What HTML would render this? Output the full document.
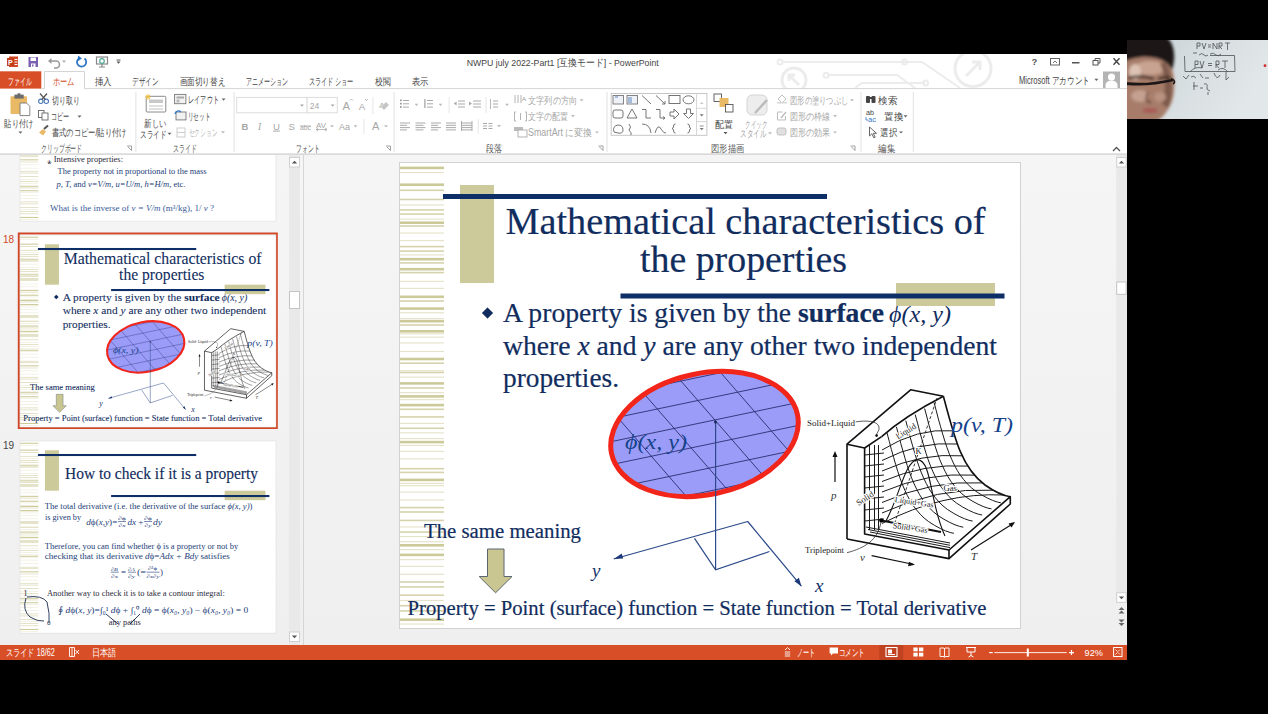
<!DOCTYPE html>
<html><head><meta charset="utf-8">
<style>
*{margin:0;padding:0;box-sizing:border-box}
html,body{width:1268px;height:714px;overflow:hidden;background:#000}
body{position:relative;font-family:"Liberation Sans",sans-serif}
.a{position:absolute}
svg{display:block}
</style></head>
<body>
<div class="a" style="left:0;top:54px;width:1127px;height:101px;background:#fff"></div>
<div class="a" style="left:0;top:155px;width:1127px;height:490px;background:linear-gradient(#f5f5f5,#efefef)"></div>
<svg class="a" style="left:0;top:0" width="1268" height="714" viewBox="0 0 1268 714">
<clipPath id="tb"><rect x="0" y="54" width="1127" height="35"/></clipPath><g clip-path="url(#tb)" stroke="#ececec" stroke-width="2" fill="none"><path d="M782 62 H904 L922 62 L960 88"/><circle cx="780" cy="62" r="2.5"/><circle cx="904.5" cy="62" r="2.5"/><path d="M828 75 H897 L915 88"/><circle cx="826" cy="75.2" r="2.5"/><path d="M855 88 L862 83 H925"/><circle cx="925.6" cy="83" r="2.5"/><circle cx="973" cy="68.6" r="18" stroke-width="3"/><path d="M966 76 L980 62 M972 62 H980 V70" stroke-width="3"/><circle cx="794" cy="80" r="12" stroke-width="3"/><path d="M799 85 L789 75 M789 81 V75 H795" stroke-width="3"/></g><rect x="9" y="56.5" width="9" height="10.5" fill="#d24726"/><rect x="7" y="58" width="7" height="8" fill="#c43e1c"/><text x="8" y="65" font-size="7" font-weight="bold" fill="#fff" font-family="Liberation Sans">P</text><rect x="14.5" y="59" width="3" height="1" fill="#fff"/><rect x="14.5" y="61.5" width="3" height="1" fill="#fff"/><rect x="14.5" y="64" width="3" height="1" fill="#fff"/><rect x="28.5" y="57" width="9.5" height="10" fill="#7b5fb0"/><rect x="30.5" y="57.5" width="5.5" height="3.5" fill="#fff"/><rect x="31" y="63.5" width="4.5" height="3.5" fill="#fff"/><rect x="32" y="64.5" width="1.5" height="2" fill="#7b5fb0"/><path d="M50 61 h6 a3.5 3.5 0 0 1 0 7 h-2" fill="none" stroke="#999" stroke-width="1.6"/><path d="M48 61 l3.5 -3 v6 z" fill="#999"/><path d="M62 60.5 h4 l-2 2.2 z" fill="#aaa"/><path d="M84.5 58.5 a4.6 4.6 0 1 1 -5 -0.5" fill="none" stroke="#2f76c7" stroke-width="1.8"/><path d="M78 55.5 l4 3 l-4 2.5 z" fill="#2f76c7"/><rect x="96.5" y="57" width="11" height="7" fill="none" stroke="#888" stroke-width="1.2"/><circle cx="102" cy="61" r="2.3" fill="none" stroke="#5a9" stroke-width="1.2"/><path d="M99 67 h6 M102 64 v3" stroke="#888" stroke-width="1.2"/><path d="M116.5 60 h4" stroke="#555" stroke-width="1"/><path d="M116.5 61.5 h4 l-2 2.2 z" fill="#555"/><text x="466.7" y="66.1" font-size="9.8" fill="#444" font-family="Liberation Sans" text-anchor="start" textLength="192" lengthAdjust="spacingAndGlyphs" >NWPU july 2022-Part1 [互換モード] - PowerPoint</text><text x="1031.5" y="65" font-size="9.5" font-weight="bold" fill="#555" font-family="Liberation Sans">?</text><rect x="1050.5" y="58.5" width="9" height="6.5" fill="none" stroke="#666" stroke-width="1"/><path d="M1053 63 l2 -2 l2 2" fill="none" stroke="#666" stroke-width="0.9"/><rect x="1072" y="62" width="7.5" height="1.5" fill="#555"/><rect x="1093" y="60.5" width="5" height="4.5" fill="none" stroke="#555" stroke-width="1"/><path d="M1095 60.5 v-2 h5 v4.5 h-2" fill="none" stroke="#555" stroke-width="1"/><path d="M1113.5 58.3 l6 6.4 M1119.5 58.3 l-6 6.4" stroke="#444" stroke-width="1.4"/><rect x="0" y="71.3" width="41.3" height="17.3" fill="#d84f27"/><text x="8.2" y="84.5" font-size="10" fill="#fff" font-family="Liberation Sans" text-anchor="start" textLength="23.3" lengthAdjust="spacingAndGlyphs" >ファイル</text><path d="M44.5 88.6 V71.5 H84.5 V88.6" fill="#fff" stroke="#d5d5d5" stroke-width="1"/><path d="M41.3 88.6 H44.5 M84.5 88.6 H1127" stroke="#d5d5d5" stroke-width="1"/><text x="52.6" y="84.8" font-size="10" fill="#d24726" font-family="Liberation Sans" text-anchor="start" textLength="21.8" lengthAdjust="spacingAndGlyphs" >ホーム</text><text x="94.9" y="84.6" font-size="10" fill="#444" font-family="Liberation Sans" text-anchor="start" textLength="16.9" lengthAdjust="spacingAndGlyphs" >挿入</text><text x="132.3" y="84.6" font-size="10" fill="#444" font-family="Liberation Sans" text-anchor="start" textLength="26.3" lengthAdjust="spacingAndGlyphs" >デザイン</text><text x="179.6" y="84.6" font-size="10" fill="#444" font-family="Liberation Sans" text-anchor="start" textLength="45.7" lengthAdjust="spacingAndGlyphs" >画面切り替え</text><text x="246.0" y="84.6" font-size="10" fill="#444" font-family="Liberation Sans" text-anchor="start" textLength="42.1" lengthAdjust="spacingAndGlyphs" >アニメーション</text><text x="308.6" y="84.6" font-size="10" fill="#444" font-family="Liberation Sans" text-anchor="start" textLength="45.0" lengthAdjust="spacingAndGlyphs" >スライド ショー</text><text x="374.9" y="84.6" font-size="10" fill="#444" font-family="Liberation Sans" text-anchor="start" textLength="15.7" lengthAdjust="spacingAndGlyphs" >校閲</text><text x="411.9" y="84.6" font-size="10" fill="#444" font-family="Liberation Sans" text-anchor="start" textLength="16.6" lengthAdjust="spacingAndGlyphs" >表示</text><text x="1019.0" y="83.7" font-size="10" fill="#444" font-family="Liberation Sans" text-anchor="start" textLength="70.7" lengthAdjust="spacingAndGlyphs" >Microsoft アカウント</text><path d="M1094.4 78.8 h4 l-2 2.2 z" fill="#666"/><rect x="1103" y="71.5" width="17" height="16.5" fill="#b4b4b4"/><circle cx="1111.5" cy="77" r="3.6" fill="#fff"/><path d="M1105.5 88 v-3 a6 4.5 0 0 1 12 0 v3 z" fill="#fff"/><rect x="135.4" y="92" width="1" height="60" fill="#e2e2e2"/><rect x="233.6" y="92" width="1" height="60" fill="#e2e2e2"/><rect x="393.6" y="92" width="1" height="60" fill="#e2e2e2"/><rect x="606.5" y="92" width="1" height="60" fill="#e2e2e2"/><rect x="860.5" y="92" width="1" height="60" fill="#e2e2e2"/><rect x="912.8" y="92" width="1" height="60" fill="#e2e2e2"/><rect x="0" y="153.3" width="1127" height="1.7" fill="#dadada"/><text x="40.9" y="152.4" font-size="10" fill="#555" font-family="Liberation Sans" text-anchor="start" textLength="41.4" lengthAdjust="spacingAndGlyphs" >クリップボード</text><text x="173.1" y="152.4" font-size="10" fill="#555" font-family="Liberation Sans" text-anchor="start" textLength="23.6" lengthAdjust="spacingAndGlyphs" >スライド</text><text x="296.4" y="152.4" font-size="10" fill="#555" font-family="Liberation Sans" text-anchor="start" textLength="23.4" lengthAdjust="spacingAndGlyphs" >フォント</text><text x="486.0" y="152.4" font-size="10" fill="#555" font-family="Liberation Sans" text-anchor="start" textLength="16.0" lengthAdjust="spacingAndGlyphs" >段落</text><text x="711.0" y="152.4" font-size="10" fill="#555" font-family="Liberation Sans" text-anchor="start" textLength="33.0" lengthAdjust="spacingAndGlyphs" >図形描画</text><text x="878.0" y="152.4" font-size="10" fill="#555" font-family="Liberation Sans" text-anchor="start" textLength="17.0" lengthAdjust="spacingAndGlyphs" >編集</text><path d="M127.0 146 h4.5 v4.5 M128.0 147 l3.5 3.5" fill="none" stroke="#888" stroke-width="0.8"/><path d="M386.0 146 h4.5 v4.5 M387.0 147 l3.5 3.5" fill="none" stroke="#888" stroke-width="0.8"/><path d="M598.5 146 h4.5 v4.5 M599.5 147 l3.5 3.5" fill="none" stroke="#888" stroke-width="0.8"/><path d="M850.5 146 h4.5 v4.5 M851.5 147 l3.5 3.5" fill="none" stroke="#888" stroke-width="0.8"/><rect x="10.5" y="96.3" width="16.5" height="17.7" rx="1" fill="#e9b965"/><rect x="14.4" y="94.6" width="9.3" height="4" fill="#6d6d6d"/><rect x="17.5" y="93.3" width="3" height="2" fill="#6d6d6d"/><path d="M20 103 h6.5 l3.3 3.3 v9.3 h-9.8 z" fill="#fff" stroke="#777" stroke-width="0.9"/><text x="4.4" y="127.3" font-size="10" fill="#444" font-family="Liberation Sans" text-anchor="start" textLength="28.6" lengthAdjust="spacingAndGlyphs" >貼り付け</text><path d="M18.4 131.5 h4 l-2 2.2 z" fill="#666"/><circle cx="40.8" cy="101.3" r="2.2" fill="none" stroke="#4a78b8" stroke-width="1.1"/><circle cx="46.3" cy="101.3" r="2.2" fill="none" stroke="#4a78b8" stroke-width="1.1"/><path d="M41.8 99.5 L47 93.5 M45.3 99.5 L40 93.5" stroke="#555" stroke-width="1.2"/><text x="51.9" y="103.6" font-size="10" fill="#444" font-family="Liberation Sans" text-anchor="start" textLength="27.6" lengthAdjust="spacingAndGlyphs" >切り取り</text><rect x="38.5" y="110.5" width="5.5" height="7" fill="#fff" stroke="#666" stroke-width="0.9"/><rect x="42" y="113" width="6" height="7" fill="#fff" stroke="#666" stroke-width="0.9"/><text x="51.3" y="120.2" font-size="10" fill="#444" font-family="Liberation Sans" text-anchor="start" textLength="18.3" lengthAdjust="spacingAndGlyphs" >コピー</text><path d="M77.5 115.5 h4 l-2 2.2 z" fill="#666"/><path d="M39 132.5 l4 3 l3 -4 l-3 -2.5 z" fill="#e9b965"/><path d="M44 129 l4 -3.5" stroke="#555" stroke-width="2"/><text x="51.9" y="136.2" font-size="10" fill="#444" font-family="Liberation Sans" text-anchor="start" textLength="74.5" lengthAdjust="spacingAndGlyphs" >書式のコピー/貼り付け</text><rect x="146.2" y="96.3" width="19.6" height="15.7" rx="1" fill="#fff" stroke="#8a8a8a" stroke-width="1"/><rect x="149" y="99.5" width="14" height="3.5" fill="#c8c8c8"/><path d="M149 106 h14 M149 109 h14" stroke="#b0b0b0" stroke-width="0.8"/><path d="M148 94 v6 M145 97 h6 M146 95 l4 4 M150 95 l-4 4" stroke="#f3c13a" stroke-width="0.9"/><text x="144.2" y="127.3" font-size="10" fill="#444" font-family="Liberation Sans" text-anchor="start" textLength="22.1" lengthAdjust="spacingAndGlyphs" >新しい</text><text x="140.3" y="137.6" font-size="10" fill="#444" font-family="Liberation Sans" text-anchor="start" textLength="26.2" lengthAdjust="spacingAndGlyphs" >スライド</text><path d="M167.5 132.8 h4 l-2 2.2 z" fill="#666"/><rect x="174.6" y="94.4" width="11.3" height="9.3" fill="#f2f2f2" stroke="#777" stroke-width="0.9"/><rect x="176.5" y="96.5" width="7.5" height="2" fill="#aaa"/><rect x="176.5" y="99.5" width="3" height="3" fill="#bbb"/><text x="188.3" y="103.3" font-size="10" fill="#444" font-family="Liberation Sans" text-anchor="start" textLength="30.4" lengthAdjust="spacingAndGlyphs" >レイアウト</text><path d="M221.6 98.5 h4 l-2 2.2 z" fill="#666"/><rect x="176" y="112" width="10" height="7.9" fill="#f2f2f2" stroke="#777" stroke-width="0.9"/><path d="M175 114 a3.5 3.5 0 0 1 6 -2" fill="none" stroke="#2f76c7" stroke-width="1.3"/><text x="187.8" y="120.0" font-size="10" fill="#444" font-family="Liberation Sans" text-anchor="start" textLength="22.6" lengthAdjust="spacingAndGlyphs" >リセット</text><rect x="177" y="128" width="8" height="9" fill="none" stroke="#c8c8c8" stroke-width="0.9"/><path d="M177 132.5 h8" stroke="#c8c8c8" stroke-width="0.9"/><text x="188.8" y="136.1" font-size="10" fill="#b5b5b5" font-family="Liberation Sans" text-anchor="start" textLength="28.5" lengthAdjust="spacingAndGlyphs" >セクション</text><path d="M221 131.3 h4 l-2 2.2 z" fill="#bbb"/><rect x="236.7" y="97.4" width="70.4" height="15.4" fill="#fff" stroke="#dcdcdc" stroke-width="1"/><rect x="307.1" y="97.4" width="30.2" height="15.4" fill="#fff" stroke="#dcdcdc" stroke-width="1"/><path d="M300 104.5 h4 l-2 2.2 z" fill="#aaa"/><path d="M330.6 104.5 h4 l-2 2.2 z" fill="#aaa"/><text x="309.8" y="108.6" font-size="9.5" fill="#a8a8a8" font-family="Liberation Sans" text-anchor="start" textLength="9.5" lengthAdjust="spacingAndGlyphs" >24</text><text x="342.6" y="109.5" font-size="11" fill="#a8a8a8" font-family="Liberation Sans" text-anchor="start" textLength="7.5" lengthAdjust="spacingAndGlyphs" >A</text><path d="M350 100.5 l1.5 -1.5 l1.5 1.5" stroke="#a8a8a8" fill="none" stroke-width="0.8"/><text x="358.7" y="109.5" font-size="9.5" fill="#a8a8a8" font-family="Liberation Sans" text-anchor="start" textLength="6.5" lengthAdjust="spacingAndGlyphs" >A</text><path d="M365 99 l1.5 1.5 l1.5 -1.5" stroke="#a8a8a8" fill="none" stroke-width="0.8"/><rect x="372.4" y="97" width="1" height="17" fill="#e6e6e6"/><text x="379" y="107.5" font-size="8" fill="#b0b0b0" font-family="Liberation Sans" text-anchor="start" textLength="6" lengthAdjust="spacingAndGlyphs" >A</text><path d="M381 107 l5 -5 l3 3 l-5 5 z" fill="#c6c6c6"/><g fill="#a6a6a6" font-family="Liberation Sans" font-size="9.5"><text x="241.4" y="129.6" font-weight="bold">B</text><text x="258" y="129.6" font-style="italic" font-family="Liberation Serif">I</text><text x="273" y="129.6" text-decoration="underline">U</text><text x="288.5" y="129.6">S</text><text x="300" y="129.6" font-size="8" textLength="11" lengthAdjust="spacingAndGlyphs">abc</text><text x="316" y="128.1" font-size="8" textLength="10" lengthAdjust="spacingAndGlyphs">AV</text><text x="339" y="129.6" textLength="11" lengthAdjust="spacingAndGlyphs">Aa</text><text x="372" y="130.1" font-size="11">A</text></g><path d="M300 126 h11" stroke="#a6a6a6" stroke-width="0.8"/><path d="M316 129.5 h11 M316 129.5 l2 -1.5 M316 129.5 l2 1.5 M327 129.5 l-2 -1.5 M327 129.5 l-2 1.5" stroke="#a6a6a6" stroke-width="0.8" fill="none"/><path d="M330 125.3 h4 l-2 2.2 z" fill="#bbb"/><path d="M353.5 125.3 h4 l-2 2.2 z" fill="#bbb"/><path d="M384 125.3 h4 l-2 2.2 z" fill="#bbb"/><rect x="363.4" y="119" width="1" height="15" fill="#e6e6e6"/><rect x="403" y="100.0" width="6" height="1" fill="#aaa"/><rect x="403" y="103.3" width="6" height="1" fill="#aaa"/><rect x="403" y="106.6" width="6" height="1" fill="#aaa"/><rect x="400" y="99.5" width="1.7" height="1.7" fill="#999"/><rect x="400" y="102.8" width="1.7" height="1.7" fill="#999"/><rect x="400" y="106.1" width="1.7" height="1.7" fill="#999"/><path d="M414.5 103.8 h4 l-2 2.2 z" fill="#bbb"/><rect x="427" y="100.0" width="6" height="1" fill="#aaa"/><rect x="427" y="103.3" width="6" height="1" fill="#aaa"/><rect x="427" y="106.6" width="6" height="1" fill="#aaa"/><rect x="424" y="99" width="1.7" height="9" fill="#bbb"/><path d="M438.5 103.8 h4 l-2 2.2 z" fill="#bbb"/><rect x="448.6" y="97" width="1" height="16" fill="#e6e6e6"/><rect x="485.5" y="97" width="1" height="16" fill="#e6e6e6"/><rect x="458" y="100.5" width="7" height="1" fill="#aaa"/><rect x="458" y="103.5" width="7" height="1" fill="#aaa"/><rect x="458" y="106.5" width="7" height="1" fill="#aaa"/><path d="M453.6 103.5 l3 -2 v4 z" fill="#aaa"/><rect x="473" y="100.5" width="8" height="1" fill="#aaa"/><rect x="473" y="103.5" width="8" height="1" fill="#aaa"/><rect x="473" y="106.5" width="8" height="1" fill="#aaa"/><path d="M469 101.5 l3 2 l-3 2 z" fill="#aaa"/><rect x="493" y="100.5" width="5" height="1" fill="#aaa"/><rect x="493" y="103.5" width="5" height="1" fill="#aaa"/><rect x="493" y="106.5" width="5" height="1" fill="#aaa"/><path d="M490.5 99 v10" stroke="#aaa" stroke-width="0.8"/><path d="M505 103.8 h4 l-2 2.2 z" fill="#bbb"/><rect x="400" y="122.5" width="10" height="1" fill="#aaa"/><rect x="400" y="124.8" width="7" height="1" fill="#aaa"/><rect x="400" y="127.1" width="10" height="1" fill="#aaa"/><rect x="400" y="129.4" width="7" height="1" fill="#aaa"/><rect x="415.5" y="122.5" width="10" height="1" fill="#aaa"/><rect x="415.5" y="124.8" width="8" height="1" fill="#aaa"/><rect x="415.5" y="127.1" width="10" height="1" fill="#aaa"/><rect x="415.5" y="129.4" width="8" height="1" fill="#aaa"/><rect x="431" y="122.5" width="10" height="1" fill="#aaa"/><rect x="431" y="124.8" width="7" height="1" fill="#aaa"/><rect x="431" y="127.1" width="10" height="1" fill="#aaa"/><rect x="431" y="129.4" width="7" height="1" fill="#aaa"/><rect x="446" y="122.5" width="10" height="1" fill="#aaa"/><rect x="446" y="124.8" width="10" height="1" fill="#aaa"/><rect x="446" y="127.1" width="10" height="1" fill="#aaa"/><rect x="446" y="129.4" width="10" height="1" fill="#aaa"/><rect x="461" y="122.5" width="11" height="1" fill="#aaa"/><rect x="461" y="124.8" width="11" height="1" fill="#aaa"/><rect x="461" y="127.1" width="11" height="1" fill="#aaa"/><rect x="461" y="129.4" width="11" height="1" fill="#aaa"/><rect x="461" y="121" width="1" height="10" fill="#aaa"/><rect x="471.5" y="121" width="1" height="10" fill="#aaa"/><rect x="477.7" y="119" width="1" height="15" fill="#e6e6e6"/><rect x="483" y="123.0" width="4" height="1" fill="#aaa"/><rect x="483" y="125.5" width="4" height="1" fill="#aaa"/><rect x="483" y="128.0" width="4" height="1" fill="#aaa"/><rect x="488.5" y="123.0" width="4" height="1" fill="#aaa"/><rect x="488.5" y="125.5" width="4" height="1" fill="#aaa"/><rect x="488.5" y="128.0" width="4" height="1" fill="#aaa"/><path d="M497 125 h4 l-2 2.2 z" fill="#bbb"/><path d="M515 95 v8 M518 95 v8 M521 95 v8" stroke="#aaa" stroke-width="0.9"/><text x="522" y="101" font-size="6" fill="#999" font-family="Liberation Sans" text-anchor="start" >A</text><text x="528.0" y="104.0" font-size="10" fill="#a6a6a6" font-family="Liberation Sans" text-anchor="start" textLength="49.0" lengthAdjust="spacingAndGlyphs" >文字列の方向</text><path d="M579.6 99.2 h4 l-2 2.2 z" fill="#bbb"/><path d="M516 112 h-1.5 v9 h1.5 M525 112 h1.5 v9 h-1.5 M520.5 113 v7" fill="none" stroke="#aaa" stroke-width="0.9"/><text x="528.0" y="119.8" font-size="10" fill="#a6a6a6" font-family="Liberation Sans" text-anchor="start" textLength="40.0" lengthAdjust="spacingAndGlyphs" >文字の配置</text><path d="M571 115 h4 l-2 2.2 z" fill="#bbb"/><rect x="514" y="127" width="9" height="4" fill="#bbb"/><rect x="518" y="130" width="9" height="7" fill="#fff" stroke="#aaa" stroke-width="0.9"/><text x="528.0" y="136.2" font-size="10" fill="#a6a6a6" font-family="Liberation Sans" text-anchor="start" textLength="64.0" lengthAdjust="spacingAndGlyphs" >SmartArt に変換</text><path d="M595 131.4 h4 l-2 2.2 z" fill="#bbb"/><rect x="611.2" y="93.5" width="95.7" height="41.8" fill="#fff" stroke="#c6c6c6" stroke-width="1"/><path d="M696.5 93.5 v41.8 M696.5 108.3 h10.4 M696.5 121.6 h10.4" stroke="#d6d6d6" stroke-width="1"/><path d="M701.7 102 l-2 2 h4 z" fill="#ccc"/><path d="M699.7 114.3 h4 l-2 2.2 z" fill="#777"/><path d="M699.7 126 h4" stroke="#777" stroke-width="0.8"/><path d="M699.7 128 h4 l-2 2.2 z" fill="#777"/><g fill="none" stroke="#666" stroke-width="0.9"><rect x="613" y="95.5" width="10.5" height="8.5" fill="#eef2f8" stroke="#777"/><rect x="627" y="95.5" width="10.5" height="8.5" fill="#eef2f8" stroke="#777"/><path d="M615 97 h3 M629 97 v6 M631 97 v6" stroke="#4a78b8"/><path d="M642 95.5 l9 8.5 M656 95.5 l9 8.5 l-3 0 M665 104 v-3"/><rect x="669" y="95.5" width="11" height="8"/><ellipse cx="688.5" cy="99.8" rx="5.5" ry="4"/><rect x="613" y="110" width="10" height="8" rx="2"/><path d="M627 118 l5 -9 l5 9 z"/><path d="M642 109.5 h4 v8.5 h5"/><path d="M656 109.5 h4 v8.5 h5 l-2 -1.5 M665 118 l-2 1.5"/><path d="M670 112 h4 v-3 l5 5 l-5 5 v-3 h-4 z"/><path d="M686.5 109 h4 v4.5 h3 l-5 5 l-5 -5 h3 z"/><path d="M614 132 q-2 -6 4 -7 q5 0 5 5 q0 4 -5 3 z"/><path d="M629 124 q3 3 0 6 q3 3 2 5"/><path d="M642 124 q8 0 9 9"/><path d="M655 133 q3 -10 6 -4 q3 5 5 4"/><path d="M675.5 124 q-2 0 -2 2 v1 q0 1 -1.5 1.5 q1.5 .5 1.5 1.5 v1 q0 2 2 2 M687.5 124 q2 0 2 2 v1 q0 1 1.5 1.5 q-1.5 .5 -1.5 1.5 v1 q0 2 -2 2"/></g><rect x="714" y="94" width="7.5" height="7.5" fill="#fff" stroke="#555" stroke-width="0.9"/><rect x="719.5" y="98" width="9" height="9" fill="#e9b965"/><rect x="725.5" y="104.5" width="7.5" height="7.5" fill="#fff" stroke="#555" stroke-width="0.9"/><text x="715.0" y="127.6" font-size="10" fill="#444" font-family="Liberation Sans" text-anchor="start" textLength="18.0" lengthAdjust="spacingAndGlyphs" >配置</text><path d="M723.5 132 h4 l-2 2.2 z" fill="#555"/><rect x="747" y="95" width="20" height="20" rx="5" fill="#ededed" stroke="#d0d0d0" stroke-width="0.9"/><path d="M755 113 l12 -13" stroke="#bbb" stroke-width="2.5"/><text x="745.0" y="127.6" font-size="10" fill="#a6a6a6" font-family="Liberation Sans" text-anchor="start" textLength="22.0" lengthAdjust="spacingAndGlyphs" >クイック</text><text x="740.0" y="137.0" font-size="10" fill="#a6a6a6" font-family="Liberation Sans" text-anchor="start" textLength="26.0" lengthAdjust="spacingAndGlyphs" >スタイル</text><path d="M768 132.2 h4 l-2 2.2 z" fill="#bbb"/><path d="M778 99 l4 -4 l4 4 l-4 4 z" fill="none" stroke="#b8b8b8" stroke-width="0.9"/><rect x="777" y="102" width="10" height="1.5" fill="#d8d8d8"/><text x="790.0" y="104.0" font-size="10" fill="#a6a6a6" font-family="Liberation Sans" text-anchor="start" textLength="58.0" lengthAdjust="spacingAndGlyphs" >図形の塗りつぶし</text><path d="M850 99.2 h4 l-2 2.2 z" fill="#bbb"/><path d="M777.5 112 h5 M777.5 112 v8 h8 v-4" fill="none" stroke="#b8b8b8" stroke-width="0.9"/><path d="M781 118 l5 -6" stroke="#b8b8b8" stroke-width="1.2"/><text x="790.0" y="119.8" font-size="10" fill="#a6a6a6" font-family="Liberation Sans" text-anchor="start" textLength="40.0" lengthAdjust="spacingAndGlyphs" >図形の枠線</text><path d="M833 115 h4 l-2 2.2 z" fill="#bbb"/><rect x="777" y="128" width="9" height="7" rx="2" fill="#e0e0e0" stroke="#bcbcbc" stroke-width="0.9"/><text x="790.0" y="136.2" font-size="10" fill="#a6a6a6" font-family="Liberation Sans" text-anchor="start" textLength="40.0" lengthAdjust="spacingAndGlyphs" >図形の効果</text><path d="M833 131.4 h4 l-2 2.2 z" fill="#bbb"/><rect x="866" y="96" width="4" height="7" rx="1" fill="#444"/><rect x="871.5" y="96" width="4" height="7" rx="1" fill="#444"/><rect x="869" y="97" width="3.5" height="2" fill="#444"/><text x="878.0" y="104.0" font-size="10" fill="#444" font-family="Liberation Sans" text-anchor="start" textLength="19.0" lengthAdjust="spacingAndGlyphs" >検索</text><text x="866" y="115" font-size="6.5" fill="#444" font-family="Liberation Sans" text-anchor="start" textLength="8" lengthAdjust="spacingAndGlyphs" >ab</text><text x="868" y="121.5" font-size="6.5" fill="#2f76c7" font-family="Liberation Sans" text-anchor="start" textLength="8" lengthAdjust="spacingAndGlyphs" >ac</text><path d="M866 117 v3 h2" stroke="#2f76c7" stroke-width="0.8" fill="none"/><text x="884.0" y="120.0" font-size="10" fill="#444" font-family="Liberation Sans" text-anchor="start" textLength="19.0" lengthAdjust="spacingAndGlyphs" >置換</text><path d="M903.5 115.2 h4 l-2 2.2 z" fill="#666"/><path d="M869.5 127 v9 l2.3 -2.2 l2 4 l1.4 -0.7 l-2 -3.8 h3.3 z" fill="#fff" stroke="#555" stroke-width="0.9"/><text x="880.0" y="136.2" font-size="10" fill="#444" font-family="Liberation Sans" text-anchor="start" textLength="17.0" lengthAdjust="spacingAndGlyphs" >選択</text><path d="M899 131.4 h4 l-2 2.2 z" fill="#666"/><path d="M1113 151 l3.5 -3.5 l3.5 3.5" fill="none" stroke="#555" stroke-width="1.3"/><rect x="289" y="155" width="11" height="490" fill="#e9e9e9"/><rect x="289.5" y="157.5" width="10" height="9.5" fill="#fff" stroke="#cfcfcf" stroke-width="1"/><path d="M291.8 163.5 l2.7 -2.7 l2.7 2.7 z" fill="#555"/><rect x="289.5" y="291.5" width="10" height="17" fill="#fff" stroke="#c4c4c4" stroke-width="1"/><rect x="289.5" y="632" width="10" height="9.5" fill="#fff" stroke="#cfcfcf" stroke-width="1"/><path d="M291.8 635.5 l2.7 2.7 l2.7 -2.7 z" fill="#555"/><rect x="303" y="155" width="1" height="490" fill="#d6d6d6"/><rect x="1116.2" y="155" width="10.5" height="447" fill="#e9e9e9"/><rect x="1116.7" y="157.5" width="9.5" height="9.5" fill="#fff" stroke="#cfcfcf" stroke-width="1"/><path d="M1118.8 163.5 l2.7 -2.7 l2.7 2.7 z" fill="#555"/><rect x="1116.7" y="282" width="9.5" height="12.3" fill="#fff" stroke="#c4c4c4" stroke-width="1"/><rect x="1116.7" y="592.7" width="9.5" height="9.6" fill="#fff" stroke="#cfcfcf" stroke-width="1"/><path d="M1118.8 596.5 l2.7 2.7 l2.7 -2.7 z" fill="#555"/><path d="M1118.5 610 l3 -3 l3 3 z M1118.5 613.5 l3 -3 l3 3 z M1118.5 619.5 l3 3 l3 -3 z M1118.5 623 l3 3 l3 -3 z" fill="#666"/><rect x="0" y="645" width="1127" height="15" fill="#d84f27"/><rect x="879.3" y="645" width="24" height="15" fill="#c04220"/><text x="5.7" y="656.4" font-size="10" fill="#fff" font-family="Liberation Sans" text-anchor="start" textLength="49.2" lengthAdjust="spacingAndGlyphs" >スライド 18/62</text><path d="M69.5 647.5 h5 v9 h-5 z M72 647.5 v9" fill="none" stroke="#fff" stroke-width="0.9"/><path d="M75.5 650 l3.5 4 M79 650 l-3.5 4" stroke="#fff" stroke-width="0.9"/><text x="91.8" y="656.4" font-size="10" fill="#fff" font-family="Liberation Sans" text-anchor="start" textLength="24.4" lengthAdjust="spacingAndGlyphs" >日本語</text><path d="M785 650 l2.5 -2.5 l2.5 2.5 M784.8 652 h5.4 M784.8 654 h5.4 M784.8 656 h5.4" fill="none" stroke="#fff" stroke-width="0.9"/><text x="797.0" y="656.4" font-size="10" fill="#fff" font-family="Liberation Sans" text-anchor="start" textLength="18.4" lengthAdjust="spacingAndGlyphs" >ノート</text><path d="M829.6 647.5 h8.4 v6 h-5 l-2 2 v-2 h-1.4 z" fill="#fff"/><text x="838.7" y="656.4" font-size="10" fill="#fff" font-family="Liberation Sans" text-anchor="start" textLength="26.4" lengthAdjust="spacingAndGlyphs" >コメント</text><rect x="886" y="647.5" width="11" height="9" fill="none" stroke="#fff" stroke-width="1.1"/><rect x="888" y="649.5" width="4" height="4" fill="#fff"/><rect x="888" y="654" width="7" height="1" fill="#fff"/><rect x="913.4" y="647.5" width="4.3" height="3.8" fill="#fff"/><rect x="919" y="647.5" width="4.3" height="3.8" fill="#fff"/><rect x="913.4" y="652.7" width="4.3" height="3.8" fill="#fff"/><rect x="919" y="652.7" width="4.3" height="3.8" fill="#fff"/><path d="M940 648 h4 l0.5 1 l0.5 -1 h4 v8.5 h-4 l-0.5 1 l-0.5 -1 h-4 z M944.5 649 v7.5" fill="none" stroke="#fff" stroke-width="0.9"/><path d="M966 647.5 h10 M967 647.5 v4.5 h8 v-4.5 M971 652 v3.5 M968.5 657 l2.5 -1.5 l2.5 1.5" fill="none" stroke="#fff" stroke-width="1"/><rect x="989.2" y="652" width="3.5" height="1.2" fill="#fff"/><rect x="994.3" y="652.2" width="72.4" height="0.9" fill="#fff"/><rect x="1026.8" y="648.5" width="2" height="8" fill="#fff"/><path d="M1069 652.6 h5 M1071.5 650 v5" stroke="#fff" stroke-width="1.2"/><text x="1084.6" y="656" font-size="9.5" fill="#fff" font-family="Liberation Sans" text-anchor="start" textLength="18.2" lengthAdjust="spacingAndGlyphs" >92%</text><rect x="1113.6" y="647.5" width="8.4" height="9" fill="none" stroke="#fff" stroke-width="1"/><path d="M1115.5 649.5 l2 2 M1120 649.5 l-2 2 M1115.5 654.5 l2 -2 M1120 654.5 l-2 -2" stroke="#fff" stroke-width="0.8"/>
<defs><clipPath id="ell"><ellipse cx="704.5" cy="434" rx="95" ry="60.6" transform="rotate(-11.9 704.5 434)"/></clipPath><clipPath id="c17"><rect x="0" y="155" width="290" height="80"/></clipPath><g id="tmpl">
<rect x="399.5" y="162.5" width="621" height="466" fill="#fff" stroke="#d2d2d2" stroke-width="1"/>
<g><rect x="400" y="166.6" width="44" height="2.6" fill="#cdca9a"/><rect x="400" y="172.0" width="44" height="1.1" fill="#e4e2c8"/><rect x="400" y="183.4" width="44" height="2.6" fill="#cdca9a"/><rect x="400" y="189.5" width="44" height="1.6" fill="#d6d3ac"/><rect x="400" y="198.7" width="44" height="1.6" fill="#d6d3ac"/><rect x="400" y="204.4" width="44" height="1.1" fill="#e4e2c8"/><rect x="400" y="209.1" width="44" height="1.6" fill="#d6d3ac"/><rect x="400" y="213.3" width="44" height="1.6" fill="#d6d3ac"/><rect x="400" y="218.6" width="44" height="1.1" fill="#e4e2c8"/><rect x="400" y="221.4" width="44" height="2.6" fill="#cdca9a"/><rect x="400" y="225.2" width="44" height="1.6" fill="#d6d3ac"/><rect x="400" y="232.5" width="44" height="1.1" fill="#e4e2c8"/><rect x="400" y="240.1" width="44" height="1.1" fill="#e4e2c8"/><rect x="400" y="245.8" width="44" height="1.6" fill="#d6d3ac"/><rect x="400" y="250.3" width="44" height="1.6" fill="#d6d3ac"/><rect x="400" y="254.4" width="44" height="1.1" fill="#e4e2c8"/><rect x="400" y="257.9" width="44" height="2.6" fill="#cdca9a"/><rect x="400" y="262.1" width="44" height="1.6" fill="#d6d3ac"/><rect x="400" y="267.9" width="44" height="2.6" fill="#cdca9a"/><rect x="400" y="271.8" width="44" height="1.6" fill="#d6d3ac"/><rect x="400" y="280.8" width="44" height="1.1" fill="#e4e2c8"/><rect x="400" y="287.8" width="44" height="1.1" fill="#e4e2c8"/><rect x="400" y="295.5" width="44" height="2.6" fill="#cdca9a"/><rect x="400" y="300.2" width="44" height="1.6" fill="#d6d3ac"/><rect x="400" y="307.3" width="44" height="2.6" fill="#cdca9a"/><rect x="400" y="312.2" width="44" height="1.1" fill="#e4e2c8"/><rect x="400" y="318.1" width="44" height="1.1" fill="#e4e2c8"/><rect x="400" y="319.9" width="44" height="2.6" fill="#cdca9a"/><rect x="400" y="324.2" width="44" height="1.6" fill="#d6d3ac"/><rect x="400" y="330.0" width="44" height="2.6" fill="#cdca9a"/><rect x="400" y="333.2" width="44" height="1.1" fill="#e4e2c8"/><rect x="400" y="336.6" width="44" height="1.1" fill="#e4e2c8"/><rect x="400" y="342.4" width="44" height="1.1" fill="#e4e2c8"/><rect x="400" y="350.9" width="44" height="1.1" fill="#e4e2c8"/><rect x="400" y="357.7" width="44" height="2.6" fill="#cdca9a"/><rect x="400" y="362.4" width="44" height="1.6" fill="#d6d3ac"/><rect x="400" y="370.2" width="44" height="1.1" fill="#e4e2c8"/><rect x="400" y="371.7" width="44" height="1.6" fill="#d6d3ac"/><rect x="400" y="376.6" width="44" height="1.1" fill="#e4e2c8"/><rect x="400" y="382.1" width="44" height="2.6" fill="#cdca9a"/><rect x="400" y="387.2" width="44" height="1.6" fill="#d6d3ac"/><rect x="400" y="392.1" width="44" height="1.1" fill="#e4e2c8"/><rect x="400" y="395.1" width="44" height="2.6" fill="#cdca9a"/><rect x="400" y="399.1" width="44" height="1.1" fill="#e4e2c8"/><rect x="400" y="403.8" width="44" height="2.6" fill="#cdca9a"/><rect x="400" y="408.5" width="44" height="1.6" fill="#d6d3ac"/><rect x="400" y="416.1" width="44" height="1.6" fill="#d6d3ac"/><rect x="400" y="422.8" width="44" height="1.1" fill="#e4e2c8"/><rect x="400" y="427.5" width="44" height="1.6" fill="#d6d3ac"/><rect x="400" y="432.3" width="44" height="1.1" fill="#e4e2c8"/><rect x="400" y="438.1" width="44" height="1.1" fill="#e4e2c8"/><rect x="400" y="440.8" width="44" height="2.6" fill="#cdca9a"/><rect x="400" y="444.9" width="44" height="1.1" fill="#e4e2c8"/><rect x="400" y="450.8" width="44" height="1.1" fill="#e4e2c8"/><rect x="400" y="458.3" width="44" height="1.1" fill="#e4e2c8"/><rect x="400" y="467.9" width="44" height="1.6" fill="#d6d3ac"/><rect x="400" y="471.6" width="44" height="1.6" fill="#d6d3ac"/><rect x="400" y="478.6" width="44" height="2.6" fill="#cdca9a"/><rect x="400" y="482.8" width="44" height="1.1" fill="#e4e2c8"/><rect x="400" y="485.2" width="44" height="1.1" fill="#e4e2c8"/><rect x="400" y="491.6" width="44" height="1.1" fill="#e4e2c8"/><rect x="400" y="499.4" width="44" height="1.1" fill="#e4e2c8"/><rect x="400" y="506.8" width="44" height="1.6" fill="#d6d3ac"/><rect x="400" y="511.2" width="44" height="1.6" fill="#d6d3ac"/><rect x="400" y="519.6" width="44" height="1.6" fill="#d6d3ac"/><rect x="400" y="526.4" width="44" height="1.1" fill="#e4e2c8"/><rect x="400" y="531.3" width="44" height="1.6" fill="#d6d3ac"/><rect x="400" y="536.0" width="44" height="1.1" fill="#e4e2c8"/><rect x="400" y="541.2" width="44" height="1.1" fill="#e4e2c8"/><rect x="400" y="544.0" width="44" height="2.6" fill="#cdca9a"/><rect x="400" y="549.1" width="44" height="1.1" fill="#e4e2c8"/><rect x="400" y="553.6" width="44" height="2.6" fill="#cdca9a"/><rect x="400" y="559.1" width="44" height="1.1" fill="#e4e2c8"/><rect x="400" y="565.8" width="44" height="1.1" fill="#e4e2c8"/><rect x="400" y="573.7" width="44" height="1.1" fill="#e4e2c8"/><rect x="400" y="581.2" width="44" height="1.6" fill="#d6d3ac"/><rect x="400" y="586.1" width="44" height="1.6" fill="#d6d3ac"/><rect x="400" y="594.4" width="44" height="1.6" fill="#d6d3ac"/><rect x="400" y="599.9" width="44" height="1.1" fill="#e4e2c8"/><rect x="400" y="604.9" width="44" height="1.6" fill="#d6d3ac"/><rect x="400" y="610.1" width="44" height="1.6" fill="#d6d3ac"/><rect x="400" y="618.4" width="44" height="2.6" fill="#cdca9a"/><rect x="400" y="623.5" width="44" height="1.1" fill="#e4e2c8"/></g>
<rect x="460" y="185" width="34" height="98" fill="#ccc99a"/>
<rect x="443" y="194" width="384" height="5" fill="#0d2e66"/>
<rect x="896" y="283" width="99" height="23" fill="#ccc99a"/>
<rect x="620.5" y="293.5" width="384" height="5" fill="#0d2e66"/>
</g><g id="ms"><use href="#tmpl"/><g font-family="Liberation Serif" fill="#112d5e" stroke="#112d5e" stroke-width="0.2">
<text x="505.5" y="233.8" font-size="38" textLength="480" lengthAdjust="spacingAndGlyphs">Mathematical characteristics of</text>
<text x="640" y="272" font-size="38" textLength="207" lengthAdjust="spacingAndGlyphs">the properties</text>
<path d="M487.5 307.5 L493 313 L487.5 318.5 L482 313 Z"/>
<text x="503" y="322" font-size="27" textLength="381" lengthAdjust="spacingAndGlyphs">A property is given by the <tspan font-weight="bold">surface</tspan></text>
<text x="503" y="354.7" font-size="27" textLength="494" lengthAdjust="spacingAndGlyphs">where <tspan font-style="italic">x</tspan> and <tspan font-style="italic">y</tspan> are any other two independent</text>
<text x="503" y="387.2" font-size="27" textLength="116" lengthAdjust="spacingAndGlyphs">properties.</text>
<text x="424" y="538" font-size="20" textLength="157" lengthAdjust="spacingAndGlyphs">The same meaning</text>
<text x="407.5" y="614.9" font-size="20" textLength="579" lengthAdjust="spacingAndGlyphs">Property = Point (surface) function = State function = Total derivative</text>
</g>
<text x="889" y="322" font-family="Liberation Serif" font-size="23" font-style="italic" fill="#112d5e" textLength="62" lengthAdjust="spacingAndGlyphs">ϕ(x, y)</text>
<path d="M487.5 549 H504 V576.5 H512 L495.6 592.8 L479.2 576.5 H487.5 Z" fill="#c9c692" stroke="#5b6570" stroke-width="1"/>
<ellipse cx="704.5" cy="434" rx="95" ry="60.6" transform="rotate(-11.9 704.5 434)" fill="#9a9cf8"/>
<g clip-path="url(#ell)" stroke="#2a2f70" stroke-width="0.9"><line x1="590" y1="400.1" x2="820" y2="351.9"/><line x1="590" y1="423.1" x2="820" y2="374.9"/><line x1="590" y1="446.1" x2="820" y2="397.9"/><line x1="590" y1="469.1" x2="820" y2="420.9"/><line x1="590" y1="493.1" x2="820" y2="444.9"/><line x1="590" y1="516.1" x2="820" y2="467.9"/><line x1="520.7" y1="360" x2="651.1" y2="510"/><line x1="567.7" y1="360" x2="698.1" y2="510"/><line x1="614.7" y1="360" x2="745.1" y2="510"/><line x1="662.7" y1="360" x2="793.1" y2="510"/><line x1="709.7" y1="360" x2="840.1" y2="510"/><line x1="756.7" y1="360" x2="887.1" y2="510"/></g>
<ellipse cx="704.5" cy="434" rx="95" ry="60.6" transform="rotate(-11.9 704.5 434)" fill="none" stroke="#f2251a" stroke-width="5"/>
<text x="625" y="449" font-family="Liberation Serif" font-style="italic" font-size="22" fill="#15438a" textLength="62" lengthAdjust="spacingAndGlyphs">ϕ(x, y)</text>
<g stroke="#2c4a8a" stroke-width="1.2" fill="none">
<line x1="715.6" y1="422" x2="715.6" y2="569.9"/>
<path d="M747.7 521.5 L613.7 559 M747.7 521.5 L801.4 586.2 M694.5 538.3 L715.6 569.9 L769.4 551.5"/>
</g>
<circle cx="715.5" cy="422" r="1.5" fill="#1a2a60"/>
<path d="M613.7 559 l8 -5.5 l1.5 5 z M801.4 586.2 l-2.5 -8.5 l-4.5 3.5 z" fill="#1d3a7a"/>
<g font-family="Liberation Serif" font-style="italic" fill="#15336a" font-size="19">
<text x="592" y="577">y</text><text x="815" y="592">x</text>
</g><clipPath id="surf"><path d="M864.6 448 L881.6 436.7 Q905 416 943.4 396.3 C955 440 962 468 985 485 C995 492 1005 496 1010.3 496.7 L949 550 L864.6 534 Z"/></clipPath><g clip-path="url(#surf)" fill="none" stroke="#1a1a1a" stroke-width="1"><path d="M934.0 402.4 L936.3 410.9 L938.4 419.1 L940.6 426.8 L942.7 434.1 L944.8 441.0 L947.0 447.6 L949.3 453.8 L951.8 459.6 L954.4 465.1 L957.2 470.3 L960.2 475.1 L963.6 479.5 L967.2 483.7 L971.2 487.6 L975.6 491.1 L981.6 494.9 L987.3 498.0 L992.6 500.4 L997.2 502.0 L1000.9 502.8"/><path d="M924.6 408.5 L926.9 417.0 L929.0 425.2 L931.2 432.9 L933.3 440.2 L935.4 447.1 L937.6 453.7 L939.9 459.9 L942.4 465.7 L945.0 471.2 L947.8 476.4 L950.8 481.2 L954.2 485.6 L957.8 489.8 L961.8 493.7 L966.2 497.2 L972.2 501.0 L977.9 504.1 L983.2 506.5 L987.8 508.1 L991.5 508.9"/><path d="M915.2 414.6 L917.5 423.1 L919.6 431.3 L921.8 439.0 L923.9 446.3 L926.0 453.2 L928.2 459.8 L930.5 466.0 L933.0 471.8 L935.6 477.3 L938.4 482.5 L941.4 487.3 L944.8 491.7 L948.4 495.9 L952.4 499.8 L956.8 503.3 L962.8 507.1 L968.5 510.2 L973.8 512.6 L978.4 514.2 L982.1 515.0"/><path d="M905.8 420.7 L908.1 429.2 L910.2 437.4 L912.4 445.1 L914.5 452.4 L916.6 459.3 L918.8 465.9 L921.1 472.1 L923.6 477.9 L926.2 483.4 L929.0 488.6 L932.0 493.4 L935.4 497.8 L939.0 502.0 L943.0 505.9 L947.4 509.4 L953.4 513.2 L959.1 516.3 L964.4 518.7 L969.0 520.3 L972.7 521.1"/><path d="M896.4 426.8 L898.7 435.3 L900.8 443.5 L903.0 451.2 L905.1 458.5 L907.2 465.4 L909.4 472.0 L911.7 478.2 L914.2 484.0 L916.8 489.5 L919.6 494.7 L922.6 499.5 L926.0 503.9 L929.6 508.1 L933.6 512.0 L938.0 515.5 L944.0 519.3 L949.7 522.4 L955.0 524.8 L959.6 526.4 L963.3 527.2"/><path d="M887.0 432.9 L889.3 441.4 L891.4 449.6 L893.6 457.3 L895.7 464.6 L897.8 471.5 L900.0 478.1 L902.3 484.3 L904.8 490.1 L907.4 495.6 L910.2 500.8 L913.2 505.6 L916.6 510.0 L920.2 514.2 L924.2 518.1 L928.6 521.6 L934.6 525.4 L940.3 528.5 L945.6 530.9 L950.2 532.5 L953.9 533.3"/><path d="M882 450.0 Q917.5 427.8 952.9 430.8"/><path d="M882 460.5 Q919.7 441.0 957.3 444.0"/><path d="M882 471.0 Q922.1 452.8 962.2 455.8"/><path d="M882 481.5 Q924.9 463.1 967.8 466.1"/><path d="M882 492.0 Q928.2 472.1 974.4 475.1"/><path d="M882 502.5 Q932.2 479.9 982.3 482.9"/><path d="M882 513.0 Q937.6 487.2 993.3 490.2"/><path d="M882 523.5 Q943.0 492.0 1003.9 495.0"/><line x1="869.5" y1="445" x2="869.5" y2="530"/><line x1="874.5" y1="445" x2="874.5" y2="530"/><line x1="878.5" y1="445" x2="878.5" y2="530"/><line x1="864.6" y1="455" x2="884" y2="453"/><line x1="864.6" y1="466" x2="884" y2="464"/><line x1="864.6" y1="477" x2="884" y2="475"/><line x1="864.6" y1="488" x2="884" y2="486"/><line x1="864.6" y1="499" x2="884" y2="497"/><line x1="864.6" y1="510" x2="884" y2="508"/><line x1="864.6" y1="521" x2="884" y2="519"/><path d="M866 527.0 L950 543.0"/><path d="M868 529.5 L950 545.3"/><path d="M870 532.0 L950 547.6"/></g><path d="M893 528 L937 398" stroke="#222" stroke-width="0.9" stroke-dasharray="3 2" fill="none"/><g fill="none" stroke="#111" stroke-width="1.6" stroke-linejoin="round">
<path d="M847 539 L847 444.2 L910.6 389.8 L943.4 396.3"/>
<path d="M847 444.2 L864.6 448 L881.6 436.7"/>
<path d="M864.6 448 L864.6 534 L949 550 L1010.3 496.7 L1010.3 504 L949 558.6 L847 539"/>
<path d="M949 550 L949 558.6"/>
<path d="M881.6 436.7 Q905 416 943.4 396.3"/>
<path d="M943.4 396.3 C955 440 962 468 985 485 C995 492 1005 496 1010.3 496.7"/>
<path d="M886 521 C900 495 905 461 917.6 459.6 C932 460 930 505 945 536" stroke-width="1.1"/>
<path d="M881.4 520.4 L941 532" stroke-width="2"/>
<path d="M835 482 L835 455 M971 550 L1014 523 M871.6 555.7 L914 564.5" stroke-width="1.2"/>
</g>
<path d="M835 451 l-2.5 6 h5 z M1015 522 l-6.5 1.5 l3 4 z M915 564.7 l-6 -3 l-1 4.5 z" fill="#111"/>
<circle cx="881.4" cy="520.4" r="2.2" fill="#000"/>
<path d="M855 422 C866 420 878 421 879 427 C880 431 876 433 876.5 435.5" fill="none" stroke="#333" stroke-width="0.8"/><circle cx="876.6" cy="435.6" r="1.3" fill="#111"/>
<path d="M847 552.7 C865 548 878 540 881 522" fill="none" stroke="#333" stroke-width="0.8"/>
<g font-family="Liberation Serif" fill="#222" font-size="8" stroke="#fff" stroke-width="2.2" paint-order="stroke" stroke-linejoin="round">
<text x="807" y="425.5" textLength="48" lengthAdjust="spacingAndGlyphs">Solid+Liquid</text>
<text x="805" y="552.5" textLength="39" lengthAdjust="spacingAndGlyphs">Triplepoint</text>
<text x="943.5" y="490.5" font-size="8.5" textLength="13.5" lengthAdjust="spacingAndGlyphs">Gas</text>
<text x="915.5" y="454" font-size="8.5">K</text>
<text transform="translate(898 439.5) rotate(-32)" font-size="8.5" textLength="22" lengthAdjust="spacingAndGlyphs">Liquid</text>
<text transform="translate(858.5 506) rotate(-33)" font-size="8.5" textLength="19" lengthAdjust="spacingAndGlyphs">Solid</text>
<text transform="translate(894.5 502) rotate(8)" font-size="8" textLength="39" lengthAdjust="spacingAndGlyphs">Liquid+Gas</text>
<text transform="translate(892.5 528) rotate(8)" font-size="8" textLength="35" lengthAdjust="spacingAndGlyphs">Solid+Gas</text>
</g>
<g font-family="Liberation Serif" font-style="italic" fill="#333" font-size="11">
<text x="831" y="499">p</text><text x="860" y="561">v</text><text x="971" y="560">T</text>
</g>
<text x="951" y="432" font-family="Liberation Serif" font-style="italic" font-size="22" fill="#15438a" textLength="62" lengthAdjust="spacingAndGlyphs">p(v, T)</text>
</g></defs><path d="M20.5 155 V220.5 H275.5 V155 Z" fill="#fff"/><path d="M20.5 155 V220.5 H275.5 V155" fill="none" stroke="#d0d0d0" stroke-width="1"/><g clip-path="url(#c17)"><g transform="translate(20 29) scale(0.4122) translate(-399.5 -162.5)"><use href="#tmpl"/></g></g><rect x="18.8" y="233.5" width="258" height="194.5" fill="#fff" stroke="#d24726" stroke-width="2"/><g transform="translate(20 235) scale(0.4122) translate(-399.5 -162.5)"><use href="#ms"/></g><text x="3" y="243" font-size="10" fill="#d24726" font-family="Liberation Sans">18</text><g transform="translate(20 441) scale(0.4122) translate(-399.5 -162.5)"><use href="#tmpl"/></g><text x="3" y="449" font-size="10" fill="#444" font-family="Liberation Sans">19</text><text x="47" y="162" font-size="9" fill="#2a2a3a" font-family="Liberation Serif" textLength="76" lengthAdjust="spacingAndGlyphs" >⁎ Intensive properties:</text><text x="57.6" y="174.3" font-size="9" fill="#233d78" font-family="Liberation Serif" textLength="149" lengthAdjust="spacingAndGlyphs" >The property not in proportional to the mass</text><text x="56.5" y="186.6" font-size="9" fill="#233d78" font-family="Liberation Serif" textLength="129" lengthAdjust="spacingAndGlyphs" ><tspan font-style='italic'>p, T,</tspan> and <tspan font-style='italic'>v=V/m, u=U/m, h=H/m,</tspan> etc.</text><text x="50.1" y="211" font-size="8.5" fill="#3a5a9a" font-family="Liberation Serif" textLength="164" lengthAdjust="spacingAndGlyphs" >What is the inverse of <tspan font-style='italic'>v = V/m</tspan>   (m³/kg), 1/ <tspan font-style='italic'>v</tspan> ?</text><text x="65" y="478.7" font-size="17" fill="#112d5e" font-family="Liberation Serif" textLength="193" lengthAdjust="spacingAndGlyphs" stroke="#112d5e" stroke-width="0.15">How to check if it is a property</text><text x="44.8" y="509" font-size="8" fill="#233d78" font-family="Liberation Serif" textLength="207.6" lengthAdjust="spacingAndGlyphs" >The total derivative (i.e. the derivative of the surface <tspan font-style='italic'>ϕ(x, y)</tspan>)</text><text x="45" y="519.5" font-size="8" fill="#233d78" font-family="Liberation Serif" textLength="36" lengthAdjust="spacingAndGlyphs" >is given by</text><text x="86.3" y="524.5" font-size="8" fill="#233d78" font-family="Liberation Serif" textLength="31" lengthAdjust="spacingAndGlyphs" ><tspan font-style='italic'>d</tspan>ϕ(<tspan font-style='italic'>x,y</tspan>)=</text><text x="118" y="520" font-size="5" fill="#233d78" font-family="Liberation Serif" textLength="8" lengthAdjust="spacingAndGlyphs" >∂ϕ</text><rect x="118" y="521.3" width="8" height="0.6" fill="#233d78"/><text x="118.5" y="527" font-size="5" fill="#233d78" font-family="Liberation Serif" textLength="7" lengthAdjust="spacingAndGlyphs" >∂<tspan font-style='italic'>x</tspan></text><text x="127.5" y="524.5" font-size="8" fill="#233d78" font-family="Liberation Serif" textLength="16" lengthAdjust="spacingAndGlyphs" ><tspan font-style='italic'>dx</tspan> +</text><text x="144" y="520" font-size="5" fill="#233d78" font-family="Liberation Serif" textLength="8" lengthAdjust="spacingAndGlyphs" >∂ϕ</text><rect x="144" y="521.3" width="8" height="0.6" fill="#233d78"/><text x="144.5" y="527" font-size="5" fill="#233d78" font-family="Liberation Serif" textLength="7" lengthAdjust="spacingAndGlyphs" >∂<tspan font-style='italic'>y</tspan></text><text x="153" y="524.5" font-size="8" fill="#233d78" font-family="Liberation Serif" textLength="9" lengthAdjust="spacingAndGlyphs" ><tspan font-style='italic'>dy</tspan></text><text x="44.8" y="548.5" font-size="8" fill="#233d78" font-family="Liberation Serif" textLength="193.4" lengthAdjust="spacingAndGlyphs" >Therefore, you can find whether ϕ is a property or not by</text><text x="44.8" y="559.2" font-size="8" fill="#233d78" font-family="Liberation Serif" textLength="185" lengthAdjust="spacingAndGlyphs" >checking that its derivative   <tspan font-style='italic'>d</tspan>ϕ=<tspan font-style='italic'>Adx + Bdy</tspan>   satisfies</text><text x="111" y="570.5" font-size="5" fill="#233d78" font-family="Liberation Serif" textLength="7" lengthAdjust="spacingAndGlyphs" >∂<tspan font-style='italic'>B</tspan></text><rect x="110.8" y="571.8" width="8" height="0.6" fill="#233d78"/><text x="111" y="577.5" font-size="5" fill="#233d78" font-family="Liberation Serif" textLength="7" lengthAdjust="spacingAndGlyphs" >∂<tspan font-style='italic'>x</tspan></text><text x="121" y="574.5" font-size="8" fill="#233d78" font-family="Liberation Serif" textLength="5" lengthAdjust="spacingAndGlyphs" >=</text><text x="128" y="570.5" font-size="5" fill="#233d78" font-family="Liberation Serif" textLength="7" lengthAdjust="spacingAndGlyphs" >∂<tspan font-style='italic'>A</tspan></text><rect x="128" y="571.8" width="8" height="0.6" fill="#233d78"/><text x="128" y="577.5" font-size="5" fill="#233d78" font-family="Liberation Serif" textLength="7" lengthAdjust="spacingAndGlyphs" >∂<tspan font-style='italic'>y</tspan></text><text x="137" y="574.5" font-size="8" fill="#233d78" font-family="Liberation Serif" textLength="9" lengthAdjust="spacingAndGlyphs" >(=</text><text x="148" y="570" font-size="5" fill="#233d78" font-family="Liberation Serif" textLength="9" lengthAdjust="spacingAndGlyphs" >∂²ϕ</text><rect x="146.5" y="571.8" width="13" height="0.6" fill="#233d78"/><text x="146.5" y="578" font-size="5" fill="#233d78" font-family="Liberation Serif" textLength="13" lengthAdjust="spacingAndGlyphs" >∂<tspan font-style='italic'>x</tspan>∂<tspan font-style='italic'>y</tspan></text><text x="160" y="574.5" font-size="8" fill="#233d78" font-family="Liberation Serif" textLength="3" lengthAdjust="spacingAndGlyphs" >)</text><text x="23.5" y="595.5" font-size="8" fill="#2a2a3a" font-family="Liberation Serif" textLength="4" lengthAdjust="spacingAndGlyphs" >1</text><text x="47" y="595.5" font-size="8.5" fill="#2a2a3a" font-family="Liberation Serif" textLength="177.8" lengthAdjust="spacingAndGlyphs" >Another way to check it is to take a contour integral:</text><text x="57.6" y="613" font-size="8.5" fill="#233d78" font-family="Liberation Serif" textLength="190.6" lengthAdjust="spacingAndGlyphs" >∮ <tspan font-style='italic'>d</tspan>ϕ(<tspan font-style='italic'>x, y</tspan>)=∫₀¹ <tspan font-style='italic'>d</tspan>ϕ + ∫₁⁰ <tspan font-style='italic'>d</tspan>ϕ = ϕ(<tspan font-style='italic'>x₀, y₀</tspan>) − ϕ(<tspan font-style='italic'>x₀, y₀</tspan>) = 0</text><text x="108.7" y="625" font-size="8" fill="#2a2a3a" font-family="Liberation Serif" textLength="32" lengthAdjust="spacingAndGlyphs" >any paths</text><path d="M27 597 q15 -2 20 5 q3 12 2 21 M26 598 q-4 12 4 19 q8 5 14 4 M106 614 l12 10 M140 614 l-10 10" fill="none" stroke="#1a2a50" stroke-width="0.9"/><text x="47" y="624.5" font-size="7" fill="#1a2a50" font-family="Liberation Serif">0</text><use href="#ms"/>
<defs><linearGradient id="wb" x1="0" y1="0" x2="1" y2="0.4"><stop offset="0" stop-color="#c3ccd0"/><stop offset="0.45" stop-color="#d5dcdf"/><stop offset="1" stop-color="#e2e7e9"/></linearGradient><filter id="bl" x="-20%" y="-20%" width="140%" height="140%"><feGaussianBlur stdDeviation="1.6"/></filter><filter id="bl2" x="-20%" y="-20%" width="140%" height="140%"><feGaussianBlur stdDeviation="0.5"/></filter><clipPath id="camc"><rect x="1127" y="40" width="141" height="79"/></clipPath></defs><rect x="1127" y="40" width="141" height="79" fill="url(#wb)"/><g clip-path="url(#camc)"><g filter="url(#bl)"><path d="M1120 58 C1136 52 1164 54 1171 66 C1176 78 1175 94 1171 104 C1166 114 1160 121 1150 124 L1120 124 Z" fill="#a77d6b"/><ellipse cx="1150" cy="68" rx="15" ry="7" fill="#c9a391"/><ellipse cx="1135" cy="72" rx="6" ry="8" fill="#dcc2b4"/><path d="M1165 62 C1174 75 1174 95 1168 108 L1162 104 C1166 90 1166 75 1160 64 Z" fill="#7d5a4c"/><ellipse cx="1140" cy="96" rx="9" ry="6" fill="#c4a090"/><ellipse cx="1160" cy="97" rx="6" ry="5" fill="#b8917f"/><path d="M1120 36 H1165 C1175 42 1176 58 1172 70 C1168 62 1160 57 1146 57 C1134 57 1127 60 1120 64 Z" fill="#1d1918"/><path d="M1128 78 C1138 76 1148 77 1154 79 M1158 79 C1163 77 1168 77 1171 79" fill="none" stroke="#3a2a24" stroke-width="2.5"/><ellipse cx="1150" cy="110.5" rx="8" ry="2.8" fill="#a85a56"/><path d="M1148 92 C1146 98 1145 101 1151 103" fill="none" stroke="#6e4c40" stroke-width="2"/></g><g filter="url(#bl2)"><path d="M1126 83.5 C1140 85 1158 83.5 1173 80" fill="none" stroke="#1c1816" stroke-width="2.8"/><path d="M1171 79 C1174 79 1176 82 1173 84" fill="none" stroke="#1c1816" stroke-width="1.6"/></g></g><g fill="none" stroke="#3e4348" stroke-width="0.8" opacity="0.9"><path d="M1197 49 v-6 h3 v3 h-3 M1202 43 l2 6 l2 -6 M1208 45 h3 M1208 47 h3 M1213 49 v-6 l4 6 v-6 M1219 49 v-6 h3 v3 h-3 l3 3 M1225 43 h5 M1227.5 43 v7"/><path d="M1193 53 h4 M1199 55 q3 -3 5 0 q2 2 4 0 M1210 54 q4 -2 6 1 q2 2 5 -1"/><path d="M1184.5 56 L1185 71.5 H1235 L1234.5 55.5 H1210"/><path d="M1195 68 v-7 h3 v3.5 h-3 M1200 61 l2 7 l2 -7 M1208 63.5 h4 M1208 65.5 h4 M1216 68 v-7 h3 v3.5 h-3 l3 3.5 M1222 61 h6 M1225 61 v7"/><path d="M1190 72 q5 -6 12 -4 M1218 70 q5 -4 10 2"/><path d="M1183 76 l3 3 l3 -4 M1191 77 q3 -2 5 1 M1200 74 l3 4 M1205 78 h4 M1214 73 q3 8 6 2 M1226 72 v8 l3 -3"/><path d="M1193 86 h5 M1194 82 v8 M1200 88 h3 M1204 84 q4 -1 3 3 q-1 3 3 4 M1208 92 v3"/></g><circle cx="1265" cy="65.7" r="1.4" fill="#d62a2a"/>
</svg>
</body></html>
